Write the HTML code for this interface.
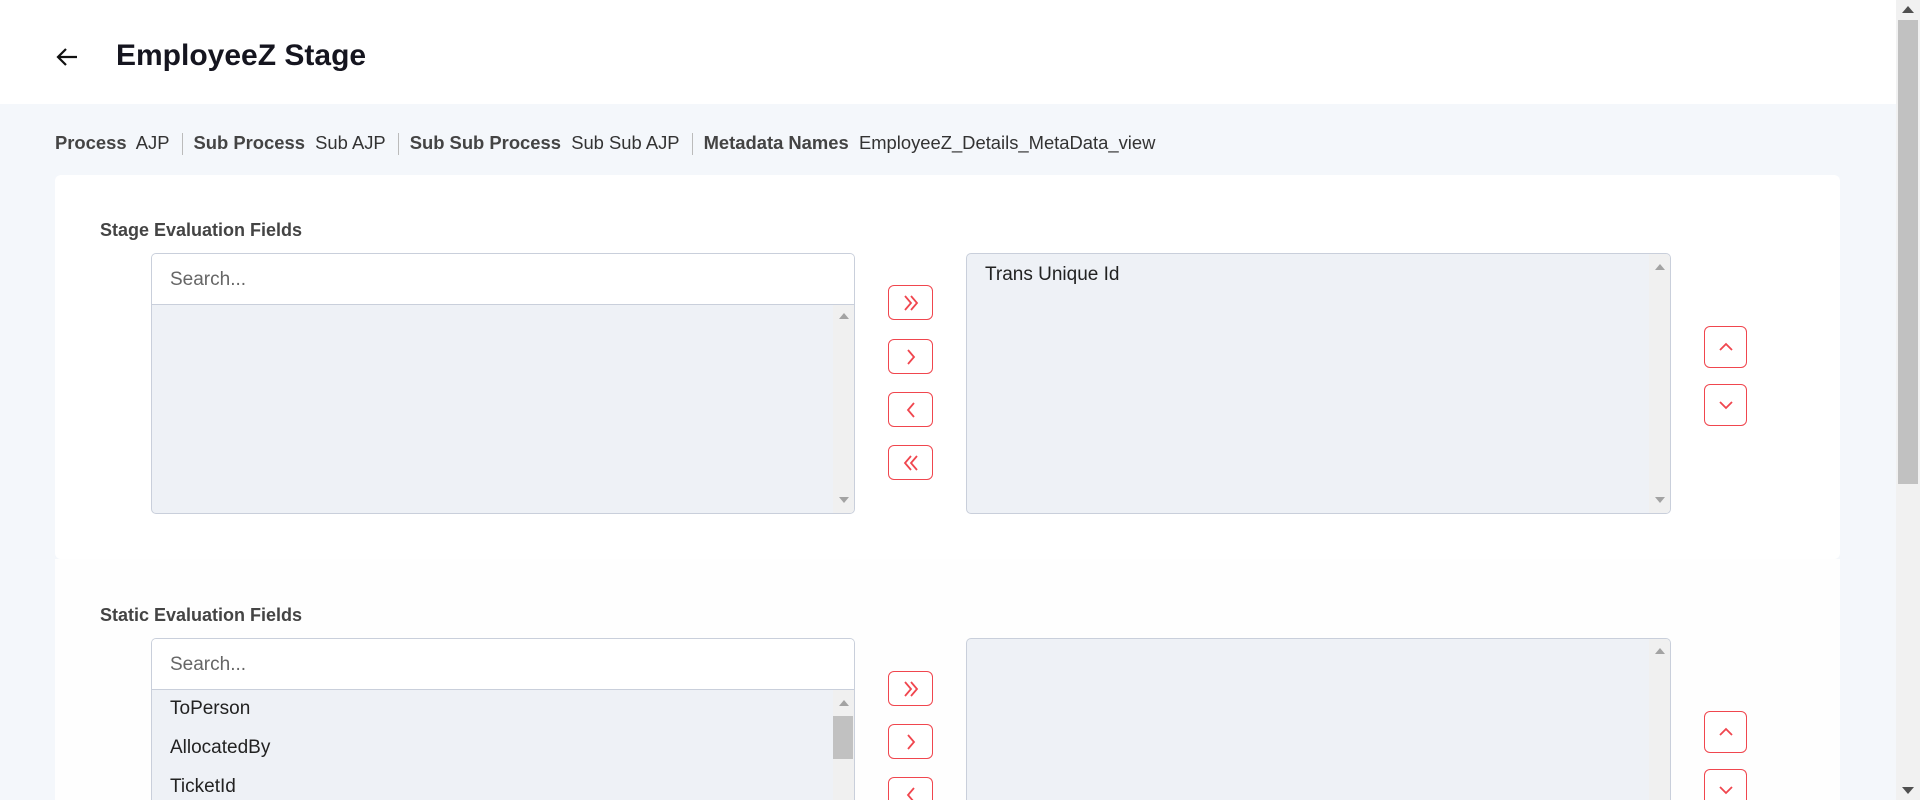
<!DOCTYPE html>
<html style="overflow:hidden;height:800px"><head><meta charset="utf-8"><style>
*{box-sizing:border-box;margin:0;padding:0}
body{width:1920px;height:800px;overflow:hidden;background:#f4f7fb;font-family:"Liberation Sans",sans-serif;position:relative;color:#1a1a1a}
.a{position:absolute}
.hdr{left:0;top:0;width:1896px;height:104px;background:#fff}
.title{left:116px;top:39px;font-size:30px;font-weight:bold;color:#15151f}
.bc{left:55px;top:132px;font-size:18.4px;color:#333;white-space:nowrap}
.bc b{color:#444}
.sep{display:inline-block;width:1px;height:22px;background:#bbb;vertical-align:middle;margin:0 11px 0 12px}
.card{background:#fff;border-radius:6px}
.lbl{font-size:18px;font-weight:bold;color:#444}
.box{border:1px solid #c9cfdb;border-radius:5px;background:#eef1f6;overflow:hidden}
.search{height:51px;background:#fff;border-bottom:1px solid #c9cfdb;padding:15px 18px;font-size:19px;color:#666}
.sb{position:absolute;right:0;width:21px;background:#f0f0f0}
.up,.dn{position:absolute;left:6px;width:0;height:0;border-left:5px solid transparent;border-right:5px solid transparent}
.up{border-bottom:6px solid #a3a3a3}.dn{border-top:6px solid #a3a3a3}
.btn{position:absolute;width:45px;height:35px;border:1.5px solid #f0464e;border-radius:6px;background:#fff;overflow:hidden}
.btn svg{position:absolute;left:12px;top:7px}
.item{position:absolute;left:18px;font-size:19px;color:#222}
</style></head><body>
<div class="a hdr"></div>
<svg class="a" style="left:55px;top:46px" width="24" height="22" viewBox="0 0 24 22"><path d="M22 11H3M11 3L3 11l8 8" fill="none" stroke="#111" stroke-width="2.2"/></svg>
<div class="a title">EmployeeZ Stage</div>
<div class="a bc"><b>Process</b>&nbsp; AJP<span class="sep"></span><b>Sub Process</b>&nbsp; Sub AJP<span class="sep"></span><b>Sub Sub Process</b>&nbsp; Sub Sub AJP<span class="sep"></span><b>Metadata Names</b>&nbsp; EmployeeZ_Details_MetaData_view</div>
<div class="a card" style="left:55px;top:175px;width:1785px;height:384px"></div>
<div class="a card" style="left:55px;top:559px;width:1785px;height:241px;background:#fefefe;border-radius:0"></div>

<div class="a lbl" style="left:100px;top:220px">Stage Evaluation Fields</div>
<div class="a box" style="left:151px;top:253px;width:704px;height:261px">
<div class="search">Search...</div>
<div class="sb" style="top:51px;bottom:0"><div class="up" style="top:8px"></div><div class="dn" style="bottom:10px"></div></div>
</div>
<div class="a box" style="left:966px;top:253px;width:705px;height:261px">
<div class="item" style="top:10px">Trans Unique Id</div>
<div class="sb" style="top:0;bottom:0"><div class="up" style="top:10px"></div><div class="dn" style="bottom:10px"></div></div>
</div>
<div class="btn" style="left:888px;top:285px"><svg width="20" height="20" viewBox="0 0 20 20"><path d="M4 3l6 7-6 7M10 3l6 7-6 7" fill="none" stroke="#f0464e" stroke-width="1.8"/></svg></div>
<div class="btn" style="left:888px;top:339px"><svg width="20" height="20" viewBox="0 0 20 20"><path d="M7 3l6 7-6 7" fill="none" stroke="#f0464e" stroke-width="1.8"/></svg></div>
<div class="btn" style="left:888px;top:392px"><svg width="20" height="20" viewBox="0 0 20 20"><path d="M13 3l-6 7 6 7" fill="none" stroke="#f0464e" stroke-width="1.8"/></svg></div>
<div class="btn" style="left:888px;top:445px"><svg width="20" height="20" viewBox="0 0 20 20"><path d="M10 3l-6 7 6 7M16 3l-6 7 6 7" fill="none" stroke="#f0464e" stroke-width="1.8"/></svg></div>
<div class="btn" style="left:1704px;top:326px;width:43px;height:42px"><svg style="top:10px;left:11px" width="20" height="20" viewBox="0 0 20 20"><path d="M4 13l6-6 6 6" fill="none" stroke="#f0464e" stroke-width="1.8"/></svg></div>
<div class="btn" style="left:1704px;top:384px;width:43px;height:42px"><svg style="top:10px;left:11px" width="20" height="20" viewBox="0 0 20 20"><path d="M4 7l6 6 6-6" fill="none" stroke="#f0464e" stroke-width="1.8"/></svg></div>

<div class="a lbl" style="left:100px;top:605px">Static Evaluation Fields</div>
<div class="a box" style="left:151px;top:638px;width:704px;height:162px;border-bottom:none;border-radius:5px 5px 0 0">
<div class="search">Search...</div>
<div class="item" style="top:59px">ToPerson</div>
<div class="item" style="top:98px">AllocatedBy</div>
<div class="item" style="top:137px">TicketId</div>
<div class="sb" style="top:51px;bottom:0"><div class="up" style="top:10px"></div><div style="position:absolute;left:0;top:26px;width:20px;height:43px;background:#c1c1c1"></div></div>
</div>
<div class="a box" style="left:966px;top:638px;width:705px;height:162px;border-bottom:none;border-radius:5px 5px 0 0">
<div class="sb" style="top:0;bottom:0"><div class="up" style="top:9px"></div></div>
</div>
<div class="btn" style="left:888px;top:671px"><svg width="20" height="20" viewBox="0 0 20 20"><path d="M4 3l6 7-6 7M10 3l6 7-6 7" fill="none" stroke="#f0464e" stroke-width="1.8"/></svg></div>
<div class="btn" style="left:888px;top:724px"><svg width="20" height="20" viewBox="0 0 20 20"><path d="M7 3l6 7-6 7" fill="none" stroke="#f0464e" stroke-width="1.8"/></svg></div>
<div class="btn" style="left:888px;top:777px;height:23px;border-bottom:none;border-radius:6px 6px 0 0"><svg width="20" height="20" viewBox="0 0 20 20"><path d="M13 3l-6 7 6 7" fill="none" stroke="#f0464e" stroke-width="1.8"/></svg></div>
<div class="btn" style="left:1704px;top:711px;width:43px;height:42px"><svg style="top:10px;left:11px" width="20" height="20" viewBox="0 0 20 20"><path d="M4 13l6-6 6 6" fill="none" stroke="#f0464e" stroke-width="1.8"/></svg></div>
<div class="btn" style="left:1704px;top:769px;width:43px;height:31px;border-bottom:none;border-radius:6px 6px 0 0"><svg style="top:10px;left:11px" width="20" height="20" viewBox="0 0 20 20"><path d="M4 7l6 6 6-6" fill="none" stroke="#f0464e" stroke-width="1.8"/></svg></div>

<div class="a" style="left:1896px;top:0;width:24px;height:800px;background:#f1f1f1">
<div style="position:absolute;left:6px;top:6px;width:0;height:0;border-left:6px solid transparent;border-right:6px solid transparent;border-bottom:7px solid #505050"></div>
<div style="position:absolute;left:2px;top:20px;width:20px;height:464px;background:#c1c1c1"></div>
<div style="position:absolute;left:6px;bottom:6px;width:0;height:0;border-left:6px solid transparent;border-right:6px solid transparent;border-top:7px solid #505050"></div>
</div>
</body></html>
